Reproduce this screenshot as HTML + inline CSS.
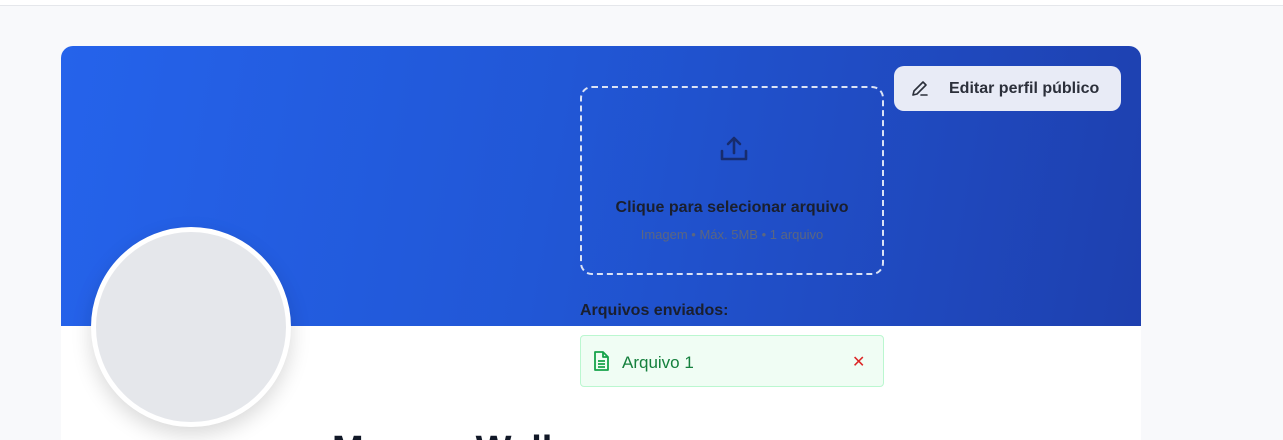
<!DOCTYPE html>
<html><head><meta charset="utf-8"><style>
*{margin:0;padding:0;box-sizing:border-box}
html,body{width:1283px;height:440px;overflow:hidden}
body{background:#f8f9fb;font-family:"Liberation Sans",sans-serif;position:relative}
.top{position:absolute;left:0;top:0;width:1283px;height:6px;background:#fff;border-bottom:1px solid #e5e7eb}
.card{position:absolute;left:61px;top:46px;width:1080px;height:394px;background:#fff;border-radius:12px 12px 0 0;overflow:hidden}
.banner{position:absolute;left:0;top:0;width:1080px;height:280px;background:linear-gradient(100deg,#2563eb 0%,#2157d6 45%,#1e40af 100%)}
.avatar{position:absolute;left:91px;top:227px;width:200px;height:200px;border-radius:50%;background:#e5e7eb;border:5px solid #fff;box-shadow:0 8px 20px rgba(0,0,0,.15)}
.up{position:absolute;left:580px;top:86px;width:304px;height:189px;border:2px dashed #dbe3f5;border-radius:12px;text-align:center}
.up svg{position:absolute;left:137px;top:47px}
.t1{position:absolute;top:111px;width:100%;font-size:16px;font-weight:bold;color:#1a1f2e}
.t2{position:absolute;top:139px;width:100%;font-size:13px;color:#5b6680}
.btn{position:absolute;left:894px;top:66px;width:227px;height:45px;background:#e8ebf6;border-radius:10px;font-size:16px;font-weight:bold;color:#2b2f3a}
.btn span{position:absolute;left:55px;top:14px}
.btn svg{position:absolute;left:16px;top:13px}
.lbl{position:absolute;left:580px;top:302px;font-size:16px;font-weight:bold;color:#1a1f2e}
.file{position:absolute;left:580px;top:335px;width:304px;height:52px;background:#f0fdf4;border:1px solid #bbf7d0;border-radius:4px}
.file span{position:absolute;left:41px;top:17px;font-size:17px;color:#15803d}
.file svg{position:absolute;left:12px;top:15px}
.x{position:absolute;left:271px;top:16px;color:#dc2626;font-size:16px}
.name{position:absolute;left:332px;top:428px;font-size:38px;font-weight:bold;color:#111827;line-height:1.2}
</style></head><body>
<div class="top"></div>
<div class="card"><div class="banner"></div></div>
<div class="avatar"></div>
<div class="up">
<svg width="30" height="28" viewBox="0 0 30 28" fill="none" stroke="#172c6e" stroke-width="2.6" stroke-linecap="round" stroke-linejoin="round"><path d="M15 18V3M9 9l6-6 6 6M3 16v8h24v-8"/></svg>
<div class="t1">Clique para selecionar arquivo</div>
<div class="t2">Imagem • Máx. 5MB • 1 arquivo</div>
</div>
<div class="btn"><svg width="20" height="20" viewBox="0 0 20 20" fill="none" stroke="#2b2f3a" stroke-width="1.6" stroke-linecap="round" stroke-linejoin="round"><path d="M3 16l1-4 9-9 3 3-9 9-4 1zM11 16h6"/></svg><span>Editar perfil público</span></div>
<div class="lbl">Arquivos enviados:</div>
<div class="file"><svg width="16" height="20" viewBox="0 0 16 20" fill="none" stroke="#16a34a" stroke-width="1.8" stroke-linejoin="round"><path d="M2 1h8l5 5v13H2zM10 1v5h5M5 10h7M5 13h7M5 16h7"/></svg><span>Arquivo 1</span><div class="x">✕</div></div>
<div class="name">Marcos Walker</div>
</body></html>
